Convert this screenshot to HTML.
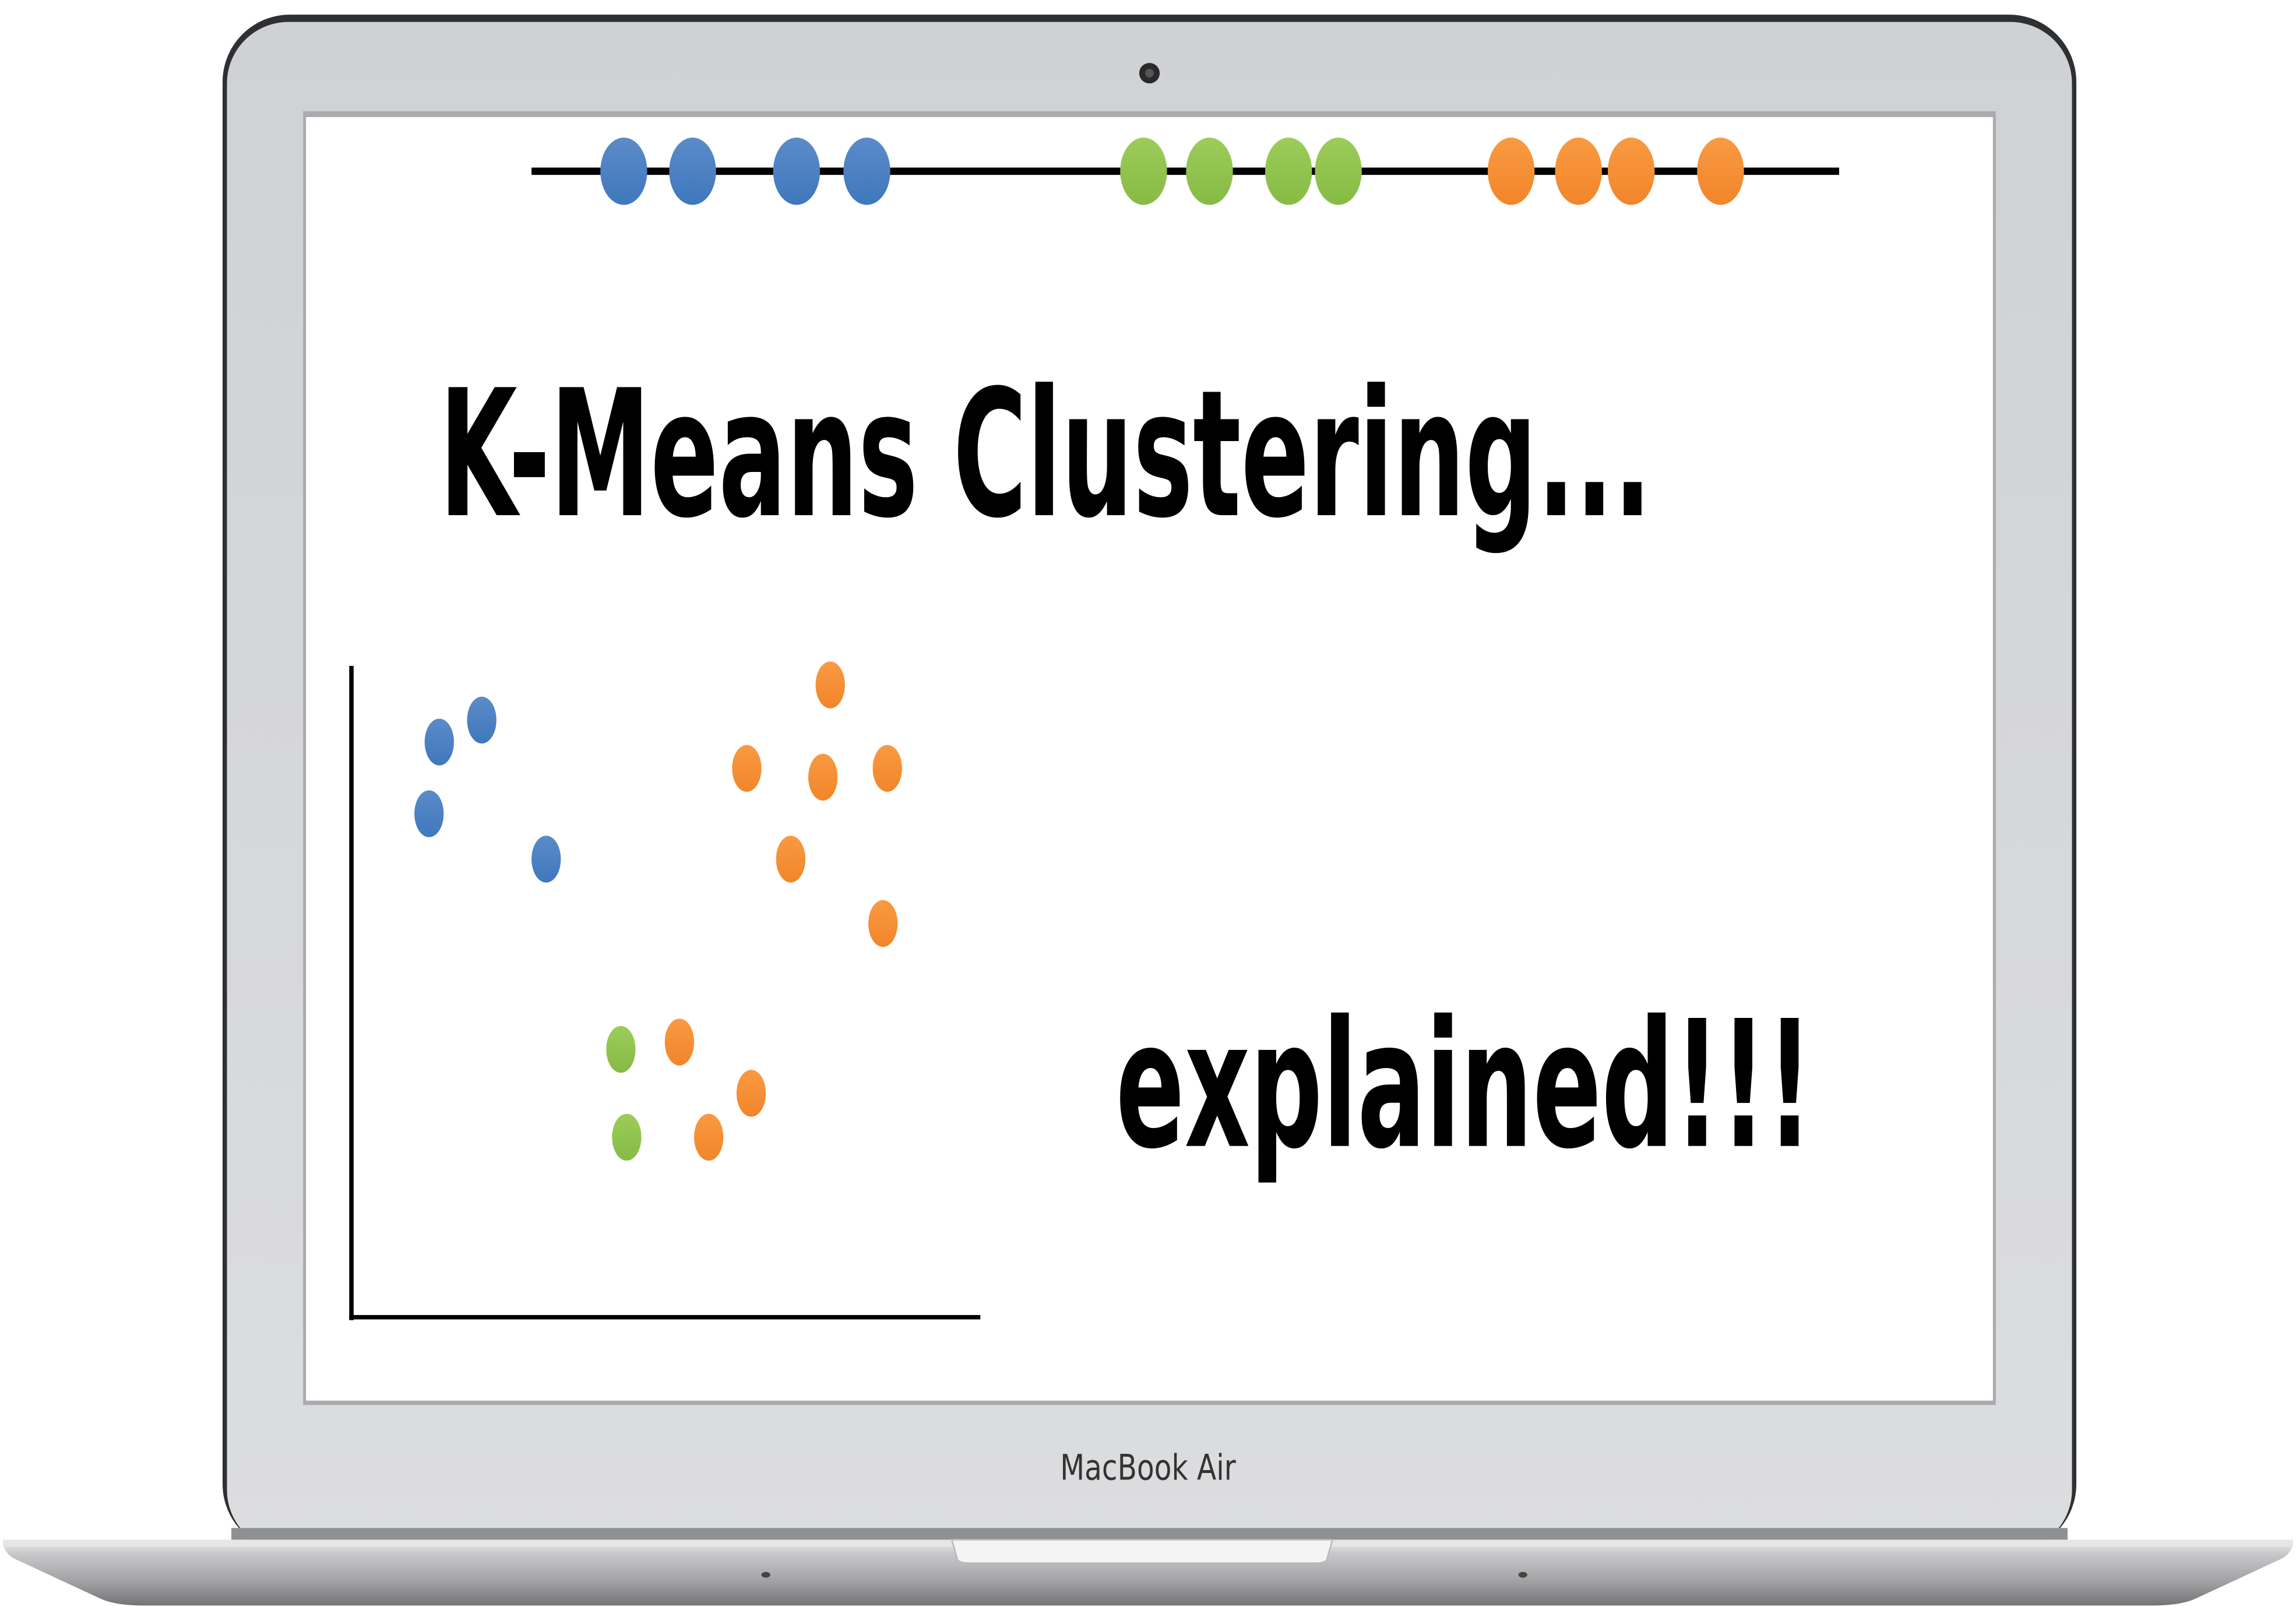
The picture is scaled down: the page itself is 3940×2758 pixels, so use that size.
<!DOCTYPE html>
<html><head><meta charset="utf-8">
<style>html,body{margin:0;padding:0;background:#fff;}svg{display:block;}</style>
</head><body>
<svg width="3940" height="2758" viewBox="0 0 1568 1098" preserveAspectRatio="none" xmlns="http://www.w3.org/2000/svg">
<defs>
<linearGradient id="lid" x1="0" y1="0" x2="0" y2="1">
<stop offset="0" stop-color="#cfd1d4"/><stop offset="0.5" stop-color="#d6d7da"/><stop offset="1" stop-color="#dcdddf"/>
</linearGradient>
<linearGradient id="base" x1="0" y1="0" x2="0" y2="1">
<stop offset="0" stop-color="#eeeeee"/><stop offset="0.2" stop-color="#cacacc"/><stop offset="0.65" stop-color="#a0a0a2"/><stop offset="1" stop-color="#747476"/>
</linearGradient>
<linearGradient id="dB" x1="0" y1="0" x2="0" y2="1"><stop offset="0" stop-color="#5b8bc9"/><stop offset="1" stop-color="#3f78bd"/></linearGradient>
<linearGradient id="dG" x1="0" y1="0" x2="0" y2="1"><stop offset="0" stop-color="#9ccc5a"/><stop offset="1" stop-color="#86bb44"/></linearGradient>
<linearGradient id="dO" x1="0" y1="0" x2="0" y2="1"><stop offset="0" stop-color="#f89a42"/><stop offset="1" stop-color="#f2852a"/></linearGradient>
</defs>
<rect x="152" y="10" width="1266" height="1050" rx="46" ry="46" fill="#2e3032"/>
<rect x="155" y="15" width="1260" height="1045" rx="42" ry="42" fill="url(#lid)"/>
<rect x="207" y="76" width="1156" height="884" fill="#a9abae"/>
<rect x="209" y="80" width="1152" height="877" fill="#ffffff"/>
<circle cx="785" cy="50" r="7" fill="#2a2a2a"/>
<circle cx="785" cy="50" r="3" fill="#555"/>
<rect x="363" y="114.5" width="893" height="5" fill="#000"/>
<g fill="url(#dB)">
<ellipse cx="426" cy="117" rx="16" ry="23"/><ellipse cx="473" cy="117" rx="16" ry="23"/>
<ellipse cx="544" cy="117" rx="16" ry="23"/><ellipse cx="592" cy="117" rx="16" ry="23"/>
</g>
<g fill="url(#dG)">
<ellipse cx="781" cy="117" rx="16" ry="23"/><ellipse cx="826" cy="117" rx="16" ry="23"/>
<ellipse cx="880" cy="117" rx="16" ry="23"/><ellipse cx="914" cy="117" rx="16" ry="23"/>
</g>
<g fill="url(#dO)">
<ellipse cx="1032" cy="117" rx="16" ry="23"/><ellipse cx="1078" cy="117" rx="16" ry="23"/>
<ellipse cx="1114" cy="117" rx="16" ry="23"/><ellipse cx="1175" cy="117" rx="16" ry="23"/>
</g>
<text x="300" y="352" font-family="DejaVu Sans, Liberation Sans, sans-serif" font-weight="bold" font-size="120" textLength="828" lengthAdjust="spacingAndGlyphs" fill="#000">K-Means Clustering...</text>
<text x="762" y="783" font-family="DejaVu Sans, Liberation Sans, sans-serif" font-weight="bold" font-size="120" textLength="476" lengthAdjust="spacingAndGlyphs" fill="#000">explained!!!</text>
<rect x="238.5" y="455" width="3" height="447" fill="#000"/>
<rect x="238.5" y="898.5" width="431" height="3" fill="#000"/>
<g fill="url(#dB)">
<ellipse cx="300" cy="507" rx="10" ry="16"/><ellipse cx="329" cy="492" rx="10" ry="16"/>
<ellipse cx="293" cy="556" rx="10" ry="16"/><ellipse cx="373" cy="587" rx="10" ry="16"/>
</g>
<g fill="url(#dO)">
<ellipse cx="567" cy="468" rx="10" ry="16"/><ellipse cx="510" cy="525" rx="10" ry="16"/>
<ellipse cx="562" cy="531" rx="10" ry="16"/><ellipse cx="606" cy="525" rx="10" ry="16"/>
<ellipse cx="540" cy="587" rx="10" ry="16"/><ellipse cx="603" cy="631" rx="10" ry="16"/>
<ellipse cx="464" cy="712" rx="10" ry="16"/><ellipse cx="513" cy="747" rx="10" ry="16"/>
<ellipse cx="484" cy="777" rx="10" ry="16"/>
</g>
<g fill="url(#dG)">
<ellipse cx="424" cy="717" rx="10" ry="16"/><ellipse cx="428" cy="777" rx="10" ry="16"/>
</g>
<text x="784" y="1011" text-anchor="middle" font-family="DejaVu Sans, Liberation Sans, sans-serif" font-size="24" textLength="120" lengthAdjust="spacingAndGlyphs" fill="#333">MacBook Air</text>
<rect x="158" y="1044" width="1254" height="8" fill="#8e9093"/>
<path d="M2 1052 L1566 1052 Q1566 1062 1556 1066 L1500 1092 Q1490 1097 1470 1097 L98 1097 Q78 1097 68 1092 L12 1066 Q2 1062 2 1052 Z" fill="url(#base)"/>
<path d="M2 1052 L1566 1052 L1566 1057 L2 1057 Z" fill="#e6e6e7"/>
<path d="M650 1052 L910 1052 L906 1066 Q904 1068 898 1068 L662 1068 Q656 1068 654 1066 Z" fill="#f4f4f4" stroke="#b9b9bb" stroke-width="1"/>
<ellipse cx="523" cy="1076" rx="3" ry="2" fill="#444"/>
<ellipse cx="1040" cy="1076" rx="3" ry="2" fill="#444"/>
</svg>
</body></html>
